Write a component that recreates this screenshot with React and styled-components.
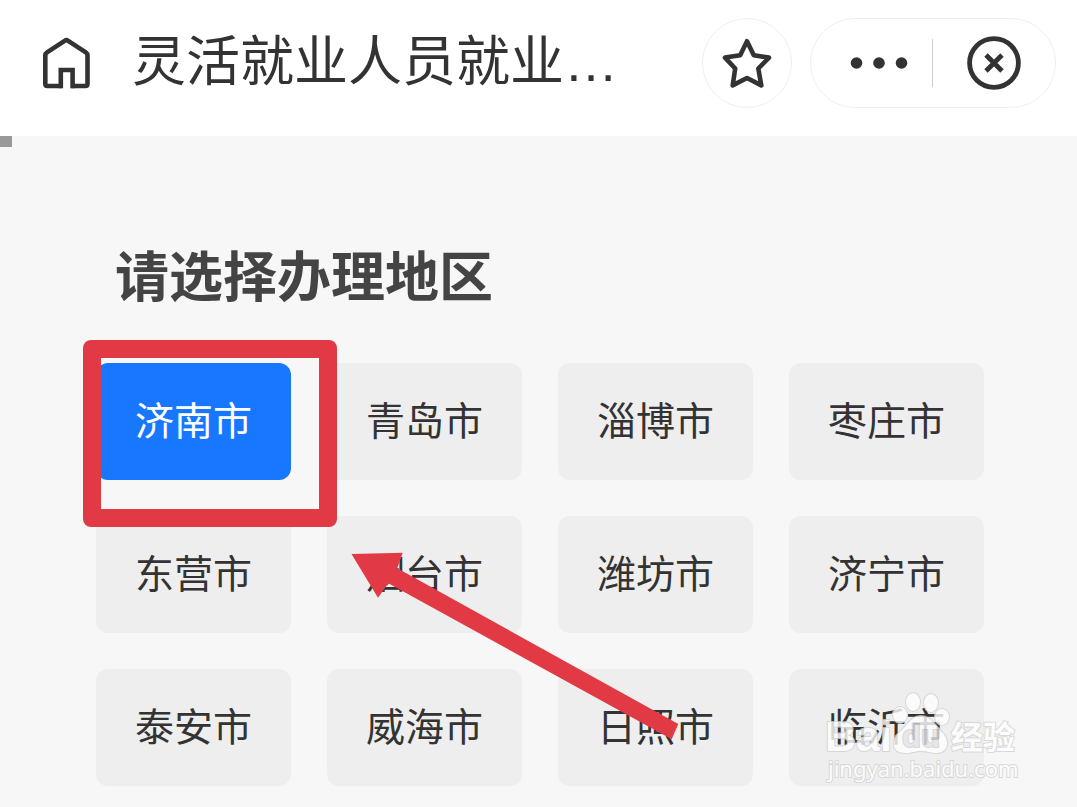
import React, { useState } from "react";
import styled, { createGlobalStyle } from "styled-components";

const GlobalStyle = createGlobalStyle`
  * {
    box-sizing: border-box;
  }
  body {
    margin: 0;
    background: #f7f7f7;
    color: #333;
    font-family: "Noto Sans CJK SC", sans-serif;
  }
  button {
    font-family: inherit;
    color: inherit;
    padding: 0;
    border: 0;
    cursor: pointer;
  }
`;

const Page = styled.div`
  position: relative;
  min-height: 100vh;
  overflow: hidden;
`;

const TopBar = styled.header`
  display: flex;
  align-items: center;
  gap: 18px;
  padding: 18px 21px 28px 42px;
  background: #fff;
`;

const HomeLink = styled.a`
  display: flex;
  color: #333;
`;

const Title = styled.h1`
  flex: 1;
  min-width: 0;
  margin: 0;
  padding: 0 24px 10px;
  font-size: 54px;
  line-height: 80px;
  font-weight: 400;
  white-space: nowrap;
  overflow: hidden;
`;

const Ellipsis = styled.span`
  font-family: "Liberation Sans", sans-serif;
  line-height: 1;
`;

const RoundButton = styled.button`
  display: flex;
  align-items: center;
  justify-content: center;
  width: 90px;
  height: 90px;
  background: #fff;
  border: 1px solid #efefef;
  border-radius: 50%;
`;

const Capsule = styled.div`
  display: flex;
  align-items: center;
  width: 246px;
  height: 90px;
  background: #fff;
  border: 1px solid #efefef;
  border-radius: 45px;
`;

const CapsuleButton = styled.button`
  flex: 1 1 0;
  min-width: 0;
  display: flex;
  align-items: center;
  justify-content: center;
  height: 100%;
  background: none;
`;

const MoreButton = styled(CapsuleButton)`
  padding-left: 14px;
  flex: 0 0 121px;
`;

const Divider = styled.span`
  width: 1px;
  height: 48px;
  background: #ccc;
`;

const ScrollMark = styled.div`
  width: 12px;
  height: 11px;
  background: #999;
`;

const Main = styled.main`
  padding: 87px 93px 21px 96px;
`;

const Heading = styled.h2`
  margin: 0;
  padding: 0 19px;
  font-size: 54px;
  line-height: 80px;
  font-weight: 700;
  color: #444;
`;

const CityGrid = styled.div`
  position: relative;
  display: grid;
  grid-template-columns: repeat(4, 1fr);
  gap: 36px;
  margin-top: 49px;
`;

const CityButton = styled.button`
  height: 117px;
  padding-bottom: 8px;
  font-size: 39px;
  line-height: 58px;
  border-radius: 12px;
  background: ${(props) => (props.$active ? "#1777ff" : "#eee")};
  color: ${(props) => (props.$active ? "#fff" : "#333")};
`;

const Frame = styled.div`
  position: absolute;
  left: -13px;
  top: -23px;
  width: 254px;
  height: 187px;
  border: 18px solid #e23a45;
  border-radius: 8px;
  pointer-events: none;
`;

const Arrow = styled.svg`
  position: absolute;
  left: 255px;
  top: 189px;
  pointer-events: none;
`;

const Watermark = styled.svg`
  position: absolute;
  right: 53px;
  bottom: 19px;
  pointer-events: none;
  fill: #fff;
  stroke: #d2d2d2;
  stroke-width: 2px;
  paint-order: stroke;
  opacity: 0.8;
`;

const cities = [
  "济南市",
  "青岛市",
  "淄博市",
  "枣庄市",
  "东营市",
  "烟台市",
  "潍坊市",
  "济宁市",
  "泰安市",
  "威海市",
  "日照市",
  "临沂市",
];

const HomeIcon = () => (
  <svg width="48" height="52" viewBox="0 0 48 52" fill="none" stroke="#333" strokeWidth="4.6">
    <path d="M19.5 49H5.5Q3.3 49 3.3 46.8V18.5Q3.3 16.5 5 15.4L22.6 3.8Q24.4 2.6 26.2 3.8L43.8 15.4Q45.5 16.5 45.5 18.5V46.8Q45.5 49 43.3 49H29.5" />
    <path d="M18.8 51.3V33H30.6V51.3" />
  </svg>
);

const StarIcon = () => (
  <svg width="50" height="52" viewBox="0 0 50 52" fill="none" stroke="#333" strokeWidth="4.6" strokeLinejoin="round">
    <path d="M25 4.2L31.8 18.3L47 20.6L36.3 31.5L39.3 48.4L25 41L10.7 48.4L13.2 31.5L3 20.6L18.2 18.3Z" />
  </svg>
);

const DotsIcon = () => (
  <svg width="58" height="12" viewBox="0 0 58 12" fill="#333">
    <circle cx="6.5" cy="6" r="5.8" />
    <circle cx="29" cy="6" r="5.8" />
    <circle cx="51.5" cy="6" r="5.8" />
  </svg>
);

const CloseIcon = () => (
  <svg width="54" height="54" viewBox="0 0 54 54" fill="none" stroke="#333" strokeWidth="4.8">
    <circle cx="27" cy="27" r="24.4" />
    <path d="M19 19L35 35M35 19L19 35" />
  </svg>
);

const App = () => {
  const [selected, setSelected] = useState("济南市");

  return (
    <Page>
      <GlobalStyle />
      <TopBar>
        <HomeLink href="#" aria-label="首页">
          <HomeIcon />
        </HomeLink>
        <Title>
          灵活就业人员就业<Ellipsis>…</Ellipsis>
        </Title>
        <RoundButton aria-label="收藏">
          <StarIcon />
        </RoundButton>
        <Capsule>
          <MoreButton aria-label="更多">
            <DotsIcon />
          </MoreButton>
          <Divider />
          <CapsuleButton aria-label="关闭">
            <CloseIcon />
          </CapsuleButton>
        </Capsule>
      </TopBar>
      <ScrollMark />
      <Main>
        <Heading>请选择办理地区</Heading>
        <CityGrid>
          {cities.map((city) => (
            <CityButton
              key={city}
              $active={city === selected}
              aria-pressed={city === selected}
              onClick={() => setSelected(city)}
            >
              {city}
            </CityButton>
          ))}
          <Frame />
          <Arrow width="330" height="190" viewBox="0 0 330 190" fill="#e23a45">
            <path d="M.5 2L51.7 .7L46.3 16.3L327.3 172L320.7 187.3L37.3 31.3L27 45.7Z" />
          </Arrow>
        </CityGrid>
      </Main>
      <Watermark width="200" height="98" viewBox="0 0 200 98">
        <text x="1" y="61" fontFamily="Liberation Sans" fontWeight="700" fontSize="43">
          Bai
        </text>
        <ellipse cx="89" cy="12" rx="7" ry="9" />
        <ellipse cx="107" cy="13" rx="7" ry="9" />
        <ellipse cx="76" cy="25" rx="7" ry="8" />
        <ellipse cx="118" cy="27" rx="7" ry="8" />
        <path d="M97 26C87 26 84 35 76 42C66 50 68 63 81 63C88 63 91 61 97 61C103 61 107 63 112 63C125 63 126 50 118 42C110 35 107 26 97 26Z" />
        <text x="78" y="57" fontFamily="Liberation Sans" fontWeight="700" fontSize="31" fill="#e6e6e6">
          du
        </text>
        <text x="127" y="59" fontFamily="Noto Sans CJK SC" fontWeight="700" fontSize="32">
          经验
        </text>
        <text x="4" y="87" fontFamily="Noto Sans" fontSize="22">
          jingyan.baidu.com
        </text>
      </Watermark>
    </Page>
  );
};

export default App;
